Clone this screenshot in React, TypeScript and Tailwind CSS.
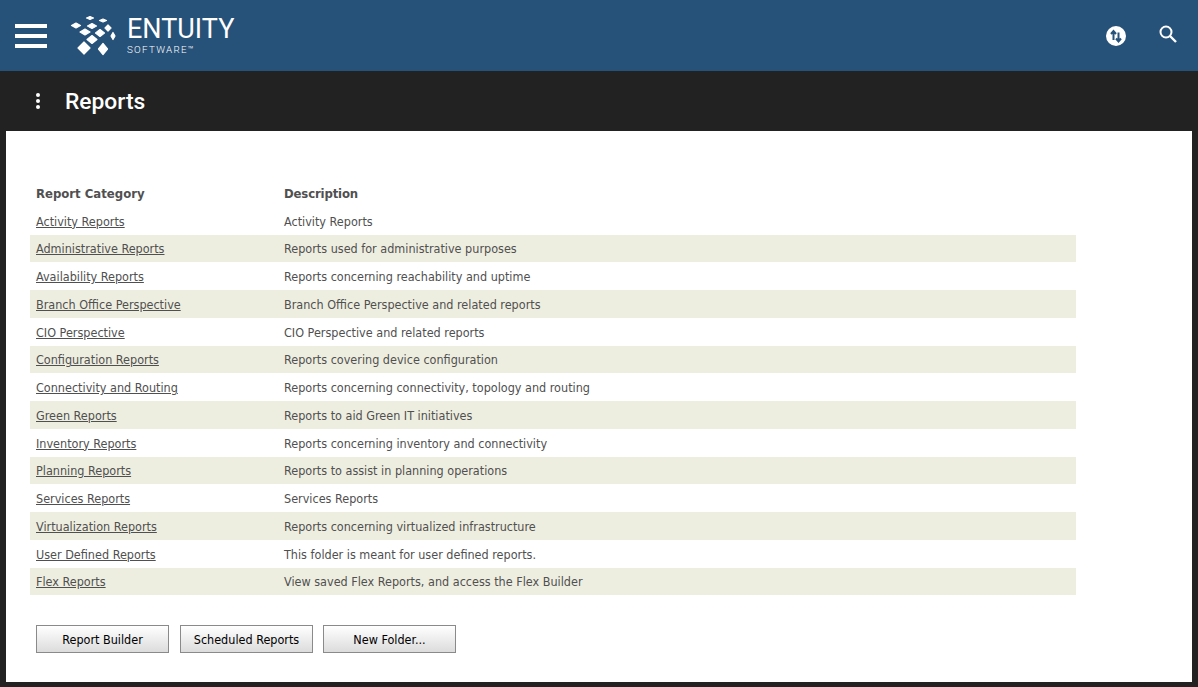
const rows: [string, string][] = [
  ["Activity Reports", "Activity Reports"],
  ["Administrative Reports", "Reports used for administrative purposes"],
  ["Availability Reports", "Reports concerning reachability and uptime"],
  ["Branch Office Perspective", "Branch Office Perspective and related reports"],
  ["CIO Perspective", "CIO Perspective and related reports"],
  ["Configuration Reports", "Reports covering device configuration"],
  ["Connectivity and Routing", "Reports concerning connectivity, topology and routing"],
  ["Green Reports", "Reports to aid Green IT initiatives"],
  ["Inventory Reports", "Reports concerning inventory and connectivity"],
  ["Planning Reports", "Reports to assist in planning operations"],
  ["Services Reports", "Services Reports"],
  ["Virtualization Reports", "Reports concerning virtualized infrastructure"],
  ["User Defined Reports", "This folder is meant for user defined reports."],
  ["Flex Reports", "View saved Flex Reports, and access the Flex Builder"],
];

function Logo() {
  const d: [number, number, number, number][] = [
    [90, 18, 3.5, 1.5], [103, 20.5, 3.5, 1.5],
    [76, 25.5, 4.5, 2.5], [92, 26, 4.5, 2.5], [108, 28, 3, 3],
    [85, 32, 5, 3], [100, 33, 4.5, 3.5], [113, 36, 2, 3.5],
    [92, 39.5, 5, 4],
    [84, 48, 6, 6], [103, 49, 4.5, 5.5],
  ];
  return (
    <svg width="56" height="44" viewBox="68 14 56 44" className="shrink-0">
      {d.map(([x, y, a, b], i) => (
        <path key={i} d={`M${x - a} ${y}L${x} ${y - b}L${x + a} ${y}L${x} ${y + b}Z`} fill="#fff" stroke="#fff" strokeWidth="1.2" strokeLinejoin="round" />
      ))}
    </svg>
  );
}

export default function App() {
  return (
    <div className="w-[1198px] h-[687px] overflow-hidden bg-[#222222] flex flex-col font-['Roboto',sans-serif]">
      <header className="h-[71px] bg-[#265178] flex items-center pl-[15px] pr-[20px] text-white">
        <div className="flex flex-col gap-[6px] w-8">
          <div className="h-[4px] bg-white" />
          <div className="h-[4px] bg-white" />
          <div className="h-[4px] bg-white" />
        </div>
        <div className="ml-[21px] flex items-center">
          <Logo />
          <div className="ml-[3px] flex flex-col">
            <span className="text-[27px] leading-[26px]">ENTUITY</span>
            <span className="mt-[2px] text-[9.8px] leading-[11px] tracking-[1.3px] font-light">SOFTWARE™</span>
          </div>
        </div>
        <div className="ml-auto flex items-center gap-[32px]">
          <svg width="20" height="20" viewBox="0 0 20 20">
            <circle cx="10" cy="10" r="10" fill="#fff" />
            <path d="M7.5 14V5.5M5 8l2.5-3L10 8" fill="none" stroke="#265178" strokeWidth="2" />
            <path d="M12.5 6.5V15M10 12.5l2.5 3 2.5-3" fill="none" stroke="#265178" strokeWidth="2" />
          </svg>
          <svg width="20" height="20" viewBox="0 0 20 20" className="mb-[4px]">
            <circle cx="8" cy="8" r="5.5" fill="none" stroke="#fff" strokeWidth="2" />
            <path d="M12 12l6 6" stroke="#fff" strokeWidth="2.4" />
          </svg>
        </div>
      </header>
      <div className="h-[60px] flex items-center pl-[36px] text-white">
        <div className="flex flex-col gap-[2px] w-[5px]">
          <div className="size-[4px] rounded-full bg-white" />
          <div className="size-[4px] rounded-full bg-white" />
          <div className="size-[4px] rounded-full bg-white" />
        </div>
        <h1 className="ml-[24px] mt-[2px] text-[22.8px] font-medium leading-none">Reports</h1>
      </div>
      <main className="mx-[6px] h-[551px] bg-white pl-[24px] pt-[49px] text-[12.5px] text-[#505050] font-['DejaVu_Sans_Condensed','DejaVu_Sans',sans-serif] [font-stretch:condensed]">
        <div className="w-[1046px]">
          <div className="flex h-[26.95px] items-center font-bold text-[13px]">
            <div className="w-[248px] ml-[6px]">Report Category</div>
            <div className="tracking-[-0.15px]">Description</div>
          </div>
          {rows.map(([a, b], i) => (
            <div key={a} className={`flex h-[27.75px] items-center pt-[2.5px] ${i % 2 === 1 ? "bg-[#eeeee0]" : ""}`}>
              <div className="w-[248px] ml-[6px]"><a href="#" className="underline">{a}</a></div>
              <div>{b}</div>
            </div>
          ))}
        </div>
        <div className="mt-[29.5px] ml-[6px] flex text-black">
          <button className="w-[133px] h-[28px] pt-[2px] border border-[#8a8a8a] bg-gradient-to-b from-white to-[#dcdcdc]">Report Builder</button>
          <button className="ml-[11px] w-[133px] h-[28px] pt-[2px] border border-[#8a8a8a] bg-gradient-to-b from-white to-[#dcdcdc]">Scheduled Reports</button>
          <button className="ml-[10px] w-[133px] h-[28px] pt-[2px] border border-[#8a8a8a] bg-gradient-to-b from-white to-[#dcdcdc]">New Folder...</button>
        </div>
      </main>
    </div>
  );
}
